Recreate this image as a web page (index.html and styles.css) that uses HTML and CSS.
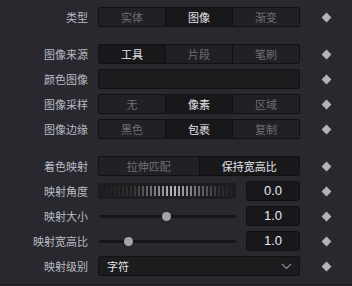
FILE: index.html
```html
<!DOCTYPE html>
<html lang="zh">
<head>
  <meta charset="UTF-8">
  <title>图像属性</title>
  <link rel="stylesheet" href="styles.css">
</head>
<body>
  <div class="panel">
    <section class="group">
      <div class="row">
        <label>类型</label>
        <div class="seg">
          <span>实体</span>
          <span class="on">图像</span>
          <span>渐变</span>
        </div>
        <i class="key"></i>
      </div>
    </section>

    <section class="group">
      <div class="row">
        <label>图像来源</label>
        <div class="seg">
          <span class="on">工具</span>
          <span>片段</span>
          <span>笔刷</span>
        </div>
        <i class="key"></i>
      </div>
      <div class="row">
        <label>颜色图像</label>
        <div class="field"></div>
        <i class="key"></i>
      </div>
      <div class="row">
        <label>图像采样</label>
        <div class="seg">
          <span>无</span>
          <span class="on">像素</span>
          <span>区域</span>
        </div>
        <i class="key"></i>
      </div>
      <div class="row">
        <label>图像边缘</label>
        <div class="seg">
          <span>黑色</span>
          <span class="on">包裹</span>
          <span>复制</span>
        </div>
        <i class="key"></i>
      </div>
    </section>

    <section class="group">
      <div class="row">
        <label>着色映射</label>
        <div class="seg">
          <span>拉伸匹配</span>
          <span class="on">保持宽高比</span>
        </div>
        <i class="key"></i>
      </div>
      <div class="row">
        <label>映射角度</label>
        <div class="ctl">
          <div class="dial"><div class="ticks"></div></div>
          <div class="num">0.0</div>
        </div>
        <i class="key"></i>
      </div>
      <div class="row">
        <label>映射大小</label>
        <div class="ctl">
          <div class="slider"><div class="knob" style="left: 49%"></div></div>
          <div class="num">1.0</div>
        </div>
        <i class="key"></i>
      </div>
      <div class="row">
        <label>映射宽高比</label>
        <div class="ctl">
          <div class="slider"><div class="knob" style="left: 21%"></div></div>
          <div class="num">1.0</div>
        </div>
        <i class="key"></i>
      </div>
      <div class="row">
        <label>映射级别</label>
        <div class="select">
          <span>字符</span>
          <svg width="11" height="7" viewBox="0 0 11 7"><path d="M1 1 L5.5 5.5 L10 1" fill="none" stroke="#8a8a90" stroke-width="1.2"/></svg>
        </div>
        <i class="key"></i>
      </div>
    </section>
  </div>
</body>
</html>
```

FILE: styles.css
```css
* {
  margin: 0;
  box-sizing: border-box;
}
body {
  background-color: #28282e;
  font-family: "Noto Sans CJK SC", "Noto Sans", sans-serif;
  font-size: 11px;
}
.panel {
  display: flex;
  flex-direction: column;
  gap: 17px;
  padding: 7px 0 8px;
  border-bottom: 1px solid #1a1a1e;
}
.group {
  display: flex;
  flex-direction: column;
  gap: 5px;
}
.row {
  display: grid;
  grid-template-columns: 88px 202px 32px;
  column-gap: 10px;
  align-items: center;
  height: 20px;
}
.row label {
  text-align: right;
  color: #b9bcc4;
  line-height: 20px;
}
.seg {
  display: flex;
  height: 20px;
  border: 1px solid #111113;
  border-radius: 2px;
  background-color: #212125;
  overflow: hidden;
}
.seg span {
  flex: 1 1 0%;
  text-align: center;
  line-height: 18px;
  color: #6e6f75;
}
.seg span + span {
  border-left: 1px solid #111113;
}
.seg span.on {
  background-color: #18181b;
  color: #e4e5ea;
}
.field {
  height: 20px;
  border: 1px solid #111113;
  border-radius: 2px;
  background-color: #1c1c1f;
}
.key {
  justify-self: center;
  width: 7px;
  height: 7px;
  background-color: #b4b4b8;
  transform: rotate(45deg);
}
.ctl {
  display: flex;
  align-items: center;
  gap: 10px;
  height: 20px;
}
.dial {
  flex: 1 1 0%;
  height: 16px;
  background-color: #1d1d20;
  padding: 3px 0;
}
.ticks {
  height: 10px;
  background: repeating-linear-gradient(to right, #b8b8bc 0 2px, transparent 2px 4px);
  -webkit-mask-image: linear-gradient(to right, rgba(0,0,0,0) 0%, rgba(0,0,0,0.12) 25%, #000 54%, rgba(0,0,0,0.12) 88%, rgba(0,0,0,0) 100%);
  mask-image: linear-gradient(to right, rgba(0,0,0,0) 0%, rgba(0,0,0,0.12) 25%, #000 54%, rgba(0,0,0,0.12) 88%, rgba(0,0,0,0) 100%);
}
.slider {
  position: relative;
  flex: 1 1 0%;
  height: 3px;
  margin-left: 1px;
  background-color: #16161a;
  border-radius: 2px;
}
.knob {
  position: absolute;
  top: -3px;
  width: 9px;
  height: 9px;
  margin-left: -4px;
  border-radius: 50%;
  background-color: #a4a4a8;
}
.num {
  width: 54px;
  height: 20px;
  border: 1px solid #0f0f11;
  border-radius: 3px;
  background-color: #18181b;
  color: #e8eaf0;
  font-family: "Liberation Sans", Arial, sans-serif;
  font-size: 13px;
  line-height: 18px;
  text-align: center;
}
.select {
  display: flex;
  align-items: center;
  justify-content: space-between;
  height: 20px;
  padding: 0 7px 0 8px;
  border: 1px solid #111113;
  border-radius: 2px;
  background-color: #1c1c1f;
  color: #e4e5ea;
}
```
